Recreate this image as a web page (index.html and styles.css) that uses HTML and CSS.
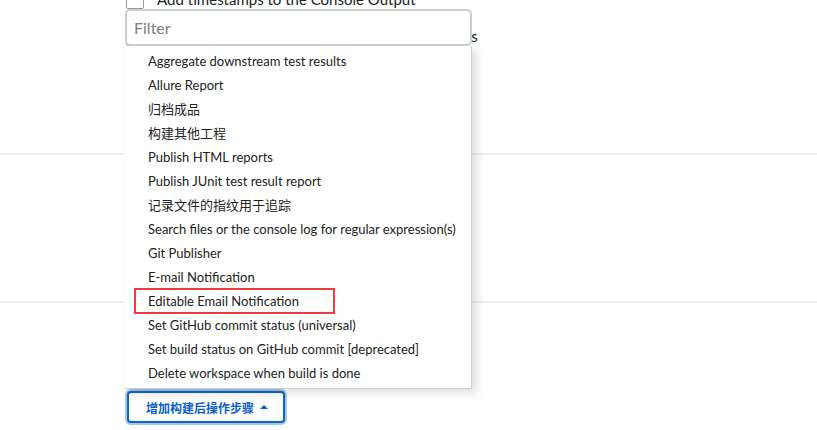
FILE: index.html
```html
<!DOCTYPE html>
<html>
<head>
<meta charset="utf-8">
<link rel="stylesheet" href="styles.css">
</head>
<body>
<div class="page">
  <div class="section first">
    <label class="opt"><span class="box"></span><span class="opt-text">Add timestamps to the Console Output</span></label>
    <label class="opt"><span class="box"></span><span class="opt-text">Inspect build log for published Gradle build scans</span></label>
  </div>
  <div class="section mid"></div>
  <div class="section last"></div>
  <div class="actions">
    <button class="add-btn">增加构建后操作步骤 <span class="caret"></span></button>
  </div>

  <div class="menu">
    <input class="filter" type="text" placeholder="Filter">
    <ul class="list">
      <li>Aggregate downstream test results</li>
      <li>Allure Report</li>
      <li>归档成品</li>
      <li>构建其他工程</li>
      <li>Publish HTML reports</li>
      <li>Publish JUnit test result report</li>
      <li>记录文件的指纹用于追踪</li>
      <li>Search files or the console log for regular expression(s)</li>
      <li>Git Publisher</li>
      <li>E-mail Notification</li>
      <li class="marked"><span class="mark">Editable Email Notification</span></li>
      <li>Set GitHub commit status (universal)</li>
      <li>Set build status on GitHub commit [deprecated]</li>
      <li>Delete workspace when build is done</li>
    </ul>
  </div>
</div>
</body>
</html>
```

FILE: styles.css
```css
html, body {
  margin: 0;
  padding: 0;
  background: #ffffff;
  overflow: hidden;
}
body {
  width: 817px;
  height: 430px;
  font-family: "Segoe UI", Lato, "Noto Sans CJK SC", sans-serif;
  color: #333;
}
.page {
  position: relative;
  display: flow-root;
  width: 817px;
  height: 430px;
  overflow: hidden;
}
.section {
  border-bottom: 2px solid #f0f0f3;
}
.first {
  margin-top: -12px;
  height: 167px;
  padding-left: 126px;
  box-sizing: border-box;
}
.mid {
  height: 146px;
}
.last {
  height: 0;
  border-bottom: none;
}
.opt {
  display: flex;
  align-items: center;
  gap: 13px;
  height: 22px;
  margin-bottom: 15px;
  font-size: 15px;
  color: #222;
}
.box {
  width: 18px;
  height: 20px;
  border: 1px solid #999;
  border-radius: 2px;
  box-sizing: border-box;
  flex: none;
}
.actions {
  position: absolute;
  left: 127px;
  top: 391px;
}
.add-btn {
  display: flex;
  align-items: center;
  gap: 6px;
  height: 32px;
  padding: 0 0 0 17px;
  width: 158px;
  white-space: nowrap;
  background: #fff;
  border: 2px solid #0b66c8;
  border-radius: 4px;
  box-shadow: 0 0 0 2px #a6c7e6;
  color: #0b5fc2;
  font-family: "Noto Sans CJK SC", sans-serif;
  font-weight: bold;
  font-size: 12px;
  box-sizing: border-box;
}
.caret {
  width: 0;
  height: 0;
  border-left: 4px solid transparent;
  border-right: 4px solid transparent;
  border-bottom: 4px solid #0b5fc2;
}

.menu {
  position: absolute;
  left: 125px;
  top: 9px;
  width: 347px;
}
.filter {
  display: block;
  width: 347px;
  height: 37px;
  box-sizing: border-box;
  border: 2px solid #c6d0d3;
  border-radius: 5px;
  padding: 0 7px;
  font-family: "Segoe UI", Lato, sans-serif;
  font-size: 16px;
  color: #333;
  background: #fff;
  outline: none;
}
.filter::placeholder {
  color: #7d7d7d;
}
.list {
  list-style: none;
  margin: 0;
  padding: 3px 0 3px;
  background: #fff;
  border-right: 1px solid #c8d0d3;
  border-bottom: 1px solid #c8d0d3;
  box-shadow: 5px 4px 9px rgba(0, 0, 0, 0.13);
  font-size: 13px;
  color: #222;
}
.list li {
  height: 24px;
  line-height: 24px;
  padding-left: 23px;
  white-space: nowrap;
}
.list li.marked {
  padding-left: 9px;
}
.mark {
  display: inline-block;
  width: 185px;
  height: 22px;
  line-height: 22px;
  padding-left: 12px;
  border: 2px solid #ef3a3e;
  box-sizing: content-box;
  margin-top: -1px;
}
```
